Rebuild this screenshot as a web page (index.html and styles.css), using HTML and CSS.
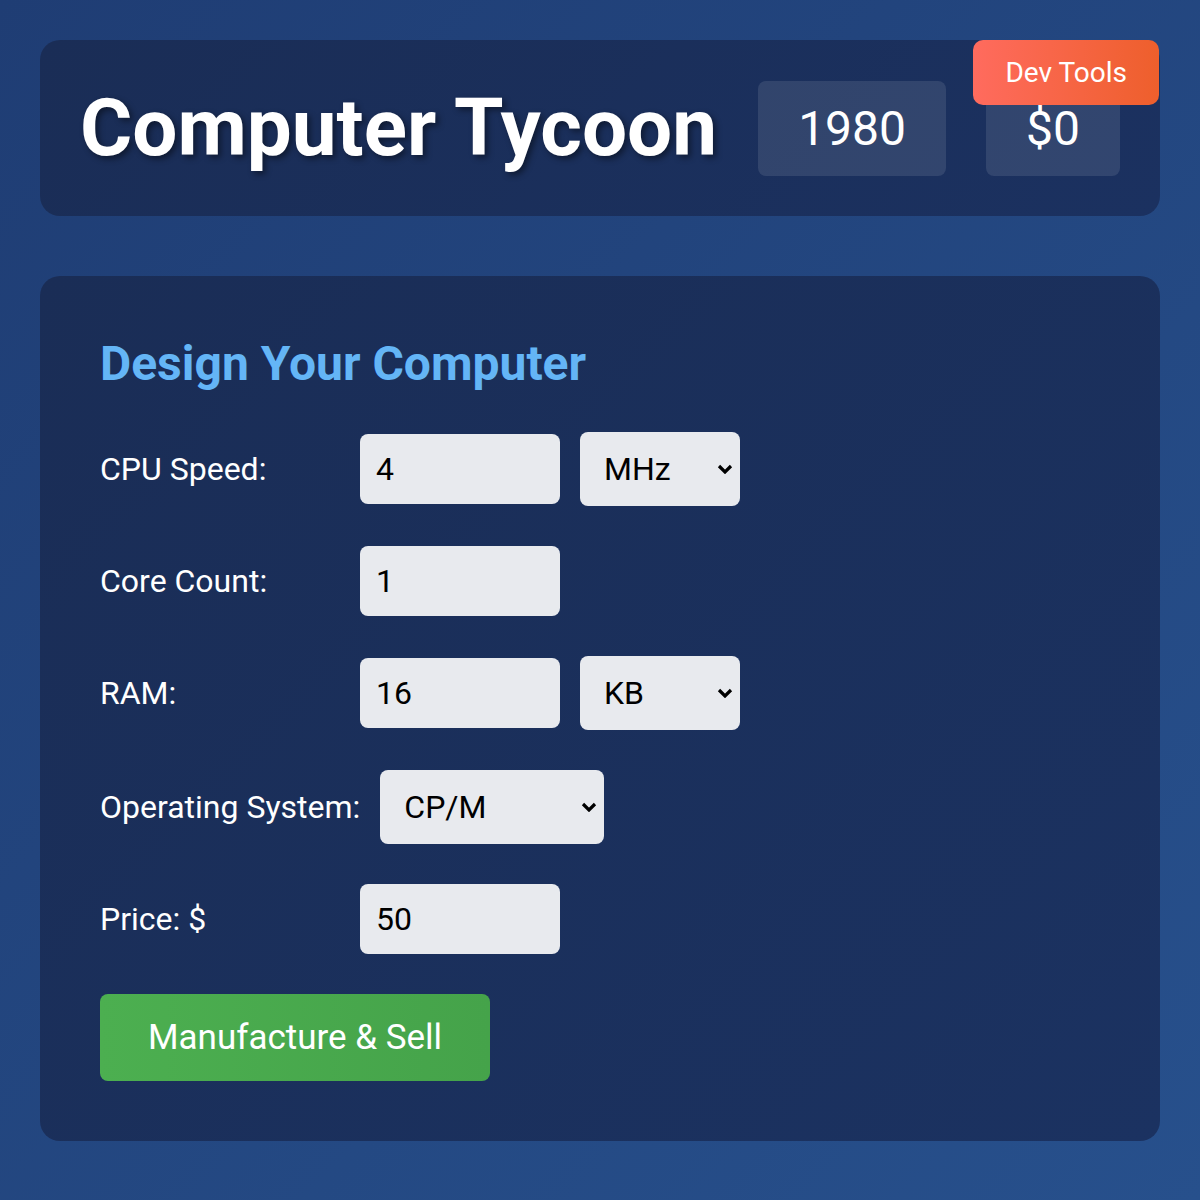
FILE: index.html
```html
<!DOCTYPE html>
<html lang="en">
<head>
  <meta charset="UTF-8">
  <meta name="viewport" content="width=device-width, initial-scale=1.0">
  <title>Computer Tycoon</title>
  <link rel="stylesheet" href="styles.css">
</head>
<body>
  <div class="header">
    <h1>Computer Tycoon</h1>
    <div class="stats">
      <div class="stat" id="year">1980</div>
      <div class="stat" id="money">$0</div>
    </div>
    <button class="dev-tools">Dev Tools</button>
  </div>

  <div class="panel">
    <h2>Design Your Computer</h2>
    <div class="row">
      <label for="cpuSpeed">CPU Speed:</label>
      <input type="number" id="cpuSpeed" value="4">
      <select id="cpuUnit" class="unit">
        <option>MHz</option>
        <option>GHz</option>
      </select>
    </div>
    <div class="row">
      <label for="cores">Core Count:</label>
      <input type="number" id="cores" value="1">
    </div>
    <div class="row">
      <label for="ram">RAM:</label>
      <input type="number" id="ram" value="16">
      <select id="ramUnit" class="unit">
        <option>KB</option>
        <option>MB</option>
        <option>GB</option>
      </select>
    </div>
    <div class="row">
      <label for="os">Operating System:</label>
      <select id="os" class="os">
        <option>CP/M</option>
        <option>MS-DOS</option>
      </select>
    </div>
    <div class="row">
      <label for="price">Price: $</label>
      <input type="number" id="price" value="50">
    </div>
    <button class="manufacture">Manufacture &amp; Sell</button>
  </div>
</body>
</html>
```

FILE: styles.css
```css
body {
  margin: 0;
  padding: 40px;
  font-family: Roboto, "Liberation Sans", sans-serif;
  color: #fff;
  background: linear-gradient(135deg, #1f3d74, #27508c);
  min-height: 1200px;
  box-sizing: border-box;
}

.header {
  position: relative;
  display: flex;
  align-items: center;
  justify-content: space-between;
  gap: 40px;
  padding: 40px;
  background: linear-gradient(135deg, #1a2d56, #1b3160);
  border-radius: 20px;
  margin-bottom: 60px;
}
.header h1 {
  margin: 0;
  font-size: 80px;
  font-weight: 700;
  line-height: 1.2;
  text-shadow: 3px 3px 6px rgba(0, 0, 0, 0.45);
}
.stats {
  display: flex;
  gap: 40px;
}
.stat {
  height: 95px;
  box-sizing: border-box;
  padding: 0 40px;
  display: flex;
  align-items: center;
  font-size: 48px;
  background-color: rgba(255, 255, 255, 0.1);
  border-radius: 8px;
}
.dev-tools {
  position: absolute;
  top: 0;
  right: 1px;
  height: 65px;
  padding: 0 32px;
  border: none;
  border-radius: 10px;
  font-family: inherit;
  font-size: 28px;
  color: #fff;
  background: linear-gradient(90deg, #ff6b5e, #ee5f2c);
  cursor: pointer;
}

.panel {
  padding: 60px;
  background: linear-gradient(135deg, #1a2d56, #1b3261);
  border-radius: 20px;
}
.panel h2 {
  margin: 0 0 40px;
  font-size: 48px;
  font-weight: 700;
  line-height: 56px;
  color: #64b5f6;
}
.row {
  display: flex;
  align-items: center;
  gap: 20px;
  margin-bottom: 40px;
}
.row label {
  min-width: 240px;
  font-size: 32px;
}
.row input {
  width: 200px;
  height: 70px;
  box-sizing: border-box;
  padding: 0 16px;
  border: none;
  border-radius: 8px;
  font-family: inherit;
  font-size: 32px;
  color: #000;
  background-color: #e8eaee;
}
/* own chevron so it stays the size of the text */
.row select {
  -webkit-appearance: none;
  appearance: none;
  height: 74px;
  box-sizing: border-box;
  padding: 0 8px 0 24px;
  border: none;
  border-radius: 8px;
  font-family: inherit;
  font-size: 32px;
  color: #000;
  background: #e8eaee url("data:image/svg+xml;utf8,<svg xmlns='http://www.w3.org/2000/svg' width='16' height='10' viewBox='0 0 16 10'><path d='M2 2l6 6 6-6' fill='none' stroke='black' stroke-width='3.2'/></svg>") no-repeat right 7px center;
}
.unit {
  width: 160px;
}
.os {
  width: 224px;
}
.manufacture {
  height: 87px;
  padding: 0 48px;
  border: none;
  border-radius: 8px;
  font-family: inherit;
  font-size: 35px;
  color: #fff;
  background: linear-gradient(90deg, #4caf50, #45a34a);
  cursor: pointer;
}
```
